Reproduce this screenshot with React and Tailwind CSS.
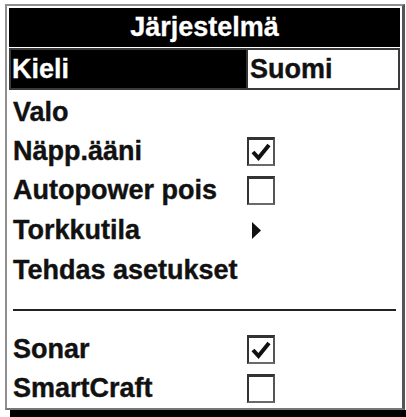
import React from "react";

const font = "font-['Liberation_Sans',Arial,sans-serif] font-bold text-[27px] leading-none";

function Box({ checked }) {
  return (
    <div className="w-[28px] h-[29px] border-2 border-t-[3px] border-[#333] border-b-[#6a6a6a] border-r-[#555] bg-white flex items-center justify-center">
      {checked && (
        <svg width="24" height="24" viewBox="0 0 24 24">
          <path d="M4 12 L9.5 18 L20 5" fill="none" stroke="#111" strokeWidth="4" strokeLinecap="butt" strokeLinejoin="miter" />
        </svg>
      )}
    </div>
  );
}

function Row({ label, h, mt, right }) {
  return (
    <div className={`flex items-center pl-[6px] ${h} ${mt || ""}`}>
      <div className={`w-[234px] text-[#111] [-webkit-text-stroke:0.4px_#111] ${font}`}>{label}</div>
      {right}
    </div>
  );
}

export default function App() {
  return (
    <div className="w-[406px] h-[417px] bg-white pl-[5px] pt-[4px] overflow-hidden">
      <div className="w-[400px] h-[406px] border-t-2 border-l-2 border-[#8e8e8e] border-r-[3px] border-r-[#555] border-b-2 border-b-[#777] bg-white flex flex-col">
        <div className={`mx-[2px] mt-[2px] h-[39px] bg-black text-white [-webkit-text-stroke:0.3px_#fff] flex items-center justify-center ${font}`}>
          Järjestelmä
        </div>
        <div className="mx-[2px] mt-[1px] h-[42px] bg-black border-2 border-[#3a3a3a] flex">
          <div className={`flex-1 flex items-center pl-[1px] text-white [-webkit-text-stroke:0.3px_#fff] ${font}`}>Kieli</div>
          <div className={`w-[152px] bg-white border-l-2 border-[#333] flex items-center pl-[2px] text-[#111] [-webkit-text-stroke:0.4px_#111] ${font}`}>
            Suomi
          </div>
        </div>
        <Row label="Valo" h="h-[40px]" mt="mt-[2px]" />
        <Row label="Näpp.ääni" h="h-[39px]" right={<Box checked />} />
        <Row label="Autopower pois" h="h-[39px]" right={<Box />} />
        <Row
          label="Torkkutila"
          h="h-[40px]"
          right={
            <svg width="9" height="17" viewBox="0 0 9 17" className="ml-[5px]">
              <polygon points="0,0 9,8.5 0,17" fill="#111" />
            </svg>
          }
        />
        <Row label="Tehdas asetukset" h="h-[40px]" />
        <div className="h-[40px] flex items-center px-[6px]">
          <div className="w-full h-[2px] bg-[#222]" />
        </div>
        <Row label="Sonar" h="h-[39px]" right={<Box checked />} />
        <Row label="SmartCraft" h="h-[39px]" right={<Box />} />
      </div>
      <div className="ml-[5px] w-[396px] h-[7px] bg-black" />
    </div>
  );
}
